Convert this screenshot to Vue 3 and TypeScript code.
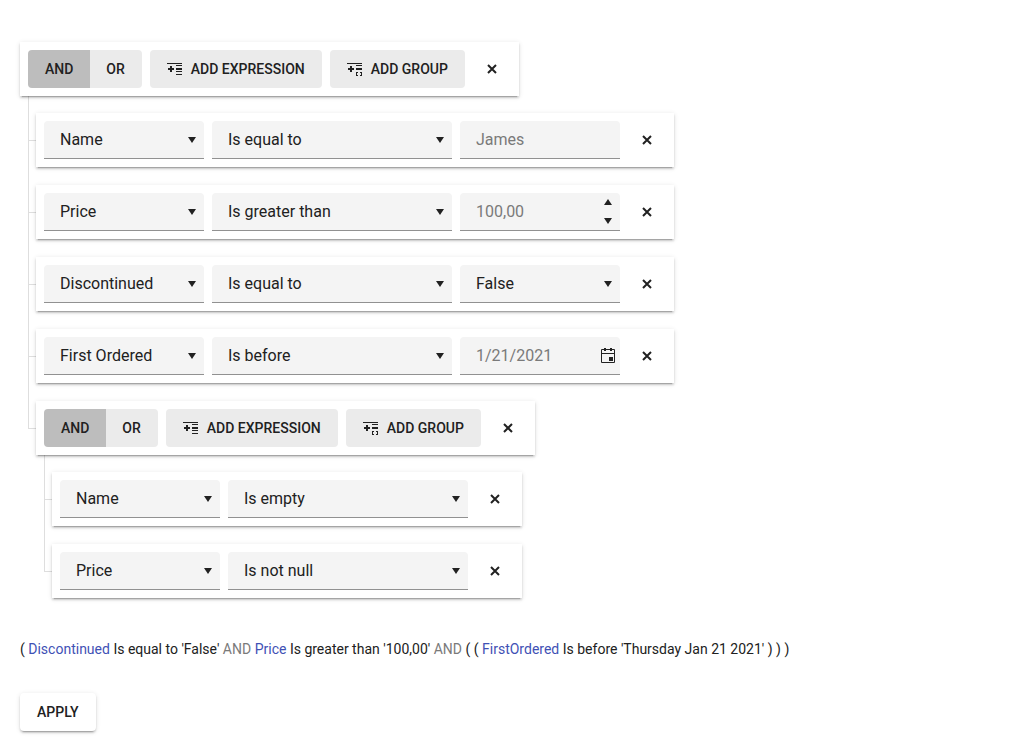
<script setup lang="ts">
import { ref } from 'vue'

type Logic = 'AND' | 'OR'
type ValueKind = 'text' | 'number' | 'boolean' | 'date' | 'none'

interface GroupNode {
  id: number
  type: 'group'
  depth: number
  logic: Logic
}

interface ExpressionNode {
  id: number
  type: 'expression'
  depth: number
  field: string
  operator: string
  kind: ValueKind
  value: string
}

type FilterNode = GroupNode | ExpressionNode

interface PreviewToken {
  text: string
  style: 'plain' | 'name' | 'logic'
}

const logics: Logic[] = ['AND', 'OR']
const fields = ['Name', 'Price', 'Discontinued', 'First Ordered']
const operators = ['Is equal to', 'Is greater than', 'Is before', 'Is empty', 'Is not null']

const nodes = ref<FilterNode[]>([
  { id: 1, type: 'group', depth: 0, logic: 'AND' },
  { id: 2, type: 'expression', depth: 1, field: 'Name', operator: 'Is equal to', kind: 'text', value: 'James' },
  { id: 3, type: 'expression', depth: 1, field: 'Price', operator: 'Is greater than', kind: 'number', value: '100,00' },
  { id: 4, type: 'expression', depth: 1, field: 'Discontinued', operator: 'Is equal to', kind: 'boolean', value: 'False' },
  { id: 5, type: 'expression', depth: 1, field: 'First Ordered', operator: 'Is before', kind: 'date', value: '1/21/2021' },
  { id: 6, type: 'group', depth: 1, logic: 'AND' },
  { id: 7, type: 'expression', depth: 2, field: 'Name', operator: 'Is empty', kind: 'none', value: '' },
  { id: 8, type: 'expression', depth: 2, field: 'Price', operator: 'Is not null', kind: 'none', value: '' },
])

const preview: PreviewToken[] = [
  { text: '(', style: 'plain' },
  { text: 'Discontinued', style: 'name' },
  { text: "Is equal to 'False'", style: 'plain' },
  { text: 'AND', style: 'logic' },
  { text: 'Price', style: 'name' },
  { text: "Is greater than '100,00'", style: 'plain' },
  { text: 'AND', style: 'logic' },
  { text: '( (', style: 'plain' },
  { text: 'FirstOrdered', style: 'name' },
  { text: "Is before 'Thursday Jan 21 2021' ) ) )", style: 'plain' },
]

let nextId = 9

function remove(index: number) {
  const depth = nodes.value[index].depth
  let end = index + 1
  if (nodes.value[index].type === 'group') {
    while (end < nodes.value.length && nodes.value[end].depth > depth) end++
  }
  nodes.value.splice(index, end - index)
}

function addExpression(index: number) {
  nodes.value.splice(index + 1, 0, {
    id: nextId++,
    type: 'expression',
    depth: nodes.value[index].depth + 1,
    field: 'Name',
    operator: 'Is equal to',
    kind: 'text',
    value: '',
  })
}

function addGroup(index: number) {
  nodes.value.splice(index + 1, 0, {
    id: nextId++,
    type: 'group',
    depth: nodes.value[index].depth + 1,
    logic: 'AND',
  })
}

function step(node: ExpressionNode, delta: number) {
  const amount = parseFloat(node.value.replace(',', '.')) || 0
  node.value = (amount + delta).toFixed(2).replace('.', ',')
}
</script>

<template>
  <main class="page">
    <ul class="tree">
      <li
        v-for="(node, index) in nodes"
        :key="node.id"
        class="node"
        :class="['depth-' + node.depth, node.type]"
      >
        <div v-if="node.type === 'group'" class="card" role="toolbar" aria-label="Filter group">
          <div class="logic-group" role="group" aria-label="Logic">
            <button
              v-for="logic in logics"
              :key="logic"
              type="button"
              class="button"
              :class="{ selected: node.logic === logic }"
              :aria-pressed="node.logic === logic"
              @click="node.logic = logic"
            >{{ logic }}</button>
          </div>
          <button type="button" class="button" @click="addExpression(index)">
            <svg class="icon" viewBox="0 0 16 16" aria-hidden="true">
              <path d="M0 2h15v1H0zM9 4h6v1H9zM9 7h6v2H9zM9 10h6v1H9zM9 13h6v1H9zM3 5h2v2h2v2H5v2H3V9H1V7h2z" />
            </svg>
            <span>ADD EXPRESSION</span>
          </button>
          <button type="button" class="button" @click="addGroup(index)">
            <svg class="icon" viewBox="0 0 16 16" aria-hidden="true">
              <path d="M0 2h15v1H0zM9 4h6v1H9zM9 7h6v2H9zM3 5h2v2h2v2H5v2H3V9H1V7h2zM9 11h2v1h-1v2h1v1H9zM13 11h2v4h-2v-1h1v-2h-1z" />
            </svg>
            <span>ADD GROUP</span>
          </button>
          <button type="button" class="close" aria-label="Remove group" @click="remove(index)">
            <svg class="icon" viewBox="0 0 16 16" aria-hidden="true">
              <path class="cross" d="M4 4l8 8M12 4l-8 8" />
            </svg>
          </button>
        </div>

        <div v-else class="card">
          <div class="field narrow">
            <select v-model="node.field" aria-label="Field">
              <option v-for="name in fields" :key="name">{{ name }}</option>
            </select>
            <svg class="caret" viewBox="0 0 8 6" aria-hidden="true"><path d="M0 0h8L4 6z" /></svg>
          </div>
          <div class="field wide">
            <select v-model="node.operator" aria-label="Operator">
              <option v-for="name in operators" :key="name">{{ name }}</option>
            </select>
            <svg class="caret" viewBox="0 0 8 6" aria-hidden="true"><path d="M0 0h8L4 6z" /></svg>
          </div>

          <div v-if="node.kind === 'boolean'" class="field narrow">
            <select v-model="node.value" aria-label="Value">
              <option>True</option>
              <option>False</option>
            </select>
            <svg class="caret" viewBox="0 0 8 6" aria-hidden="true"><path d="M0 0h8L4 6z" /></svg>
          </div>
          <div v-else-if="node.kind !== 'none'" class="field narrow">
            <input v-model="node.value" type="text" aria-label="Value" />
            <div v-if="node.kind === 'number'" class="spinner">
              <button type="button" aria-label="Increase value" @click="step(node, 1)">
                <svg viewBox="0 0 8 6" aria-hidden="true"><path d="M0 6h8L4 0z" /></svg>
              </button>
              <button type="button" aria-label="Decrease value" @click="step(node, -1)">
                <svg viewBox="0 0 8 6" aria-hidden="true"><path d="M0 0h8L4 6z" /></svg>
              </button>
            </div>
            <button v-if="node.kind === 'date'" type="button" class="calendar" aria-label="Open calendar">
              <svg class="icon" viewBox="0 0 16 16" aria-hidden="true">
                <path fill-rule="evenodd" d="M4 0h2v1h4V0h2v1h2a1 1 0 0 1 1 1v12a1 1 0 0 1-1 1H2a1 1 0 0 1-1-1V2a1 1 0 0 1 1-1h2zM2 2v3h12V2h-2v1h-2V2H6v1H4V2zM2 6v8h12V6zM9 9h4v4H9z" />
              </svg>
            </button>
          </div>

          <button type="button" class="close" aria-label="Remove expression" @click="remove(index)">
            <svg class="icon" viewBox="0 0 16 16" aria-hidden="true">
              <path class="cross" d="M4 4l8 8M12 4l-8 8" />
            </svg>
          </button>
        </div>
      </li>
    </ul>

    <p class="preview">
      <template v-for="(token, index) in preview" :key="index"><span :class="token.style">{{ token.text }}</span>{{ ' ' }}</template>
    </p>

    <button type="button" class="button apply">APPLY</button>
  </main>
</template>

<style scoped>
.page {
  padding: 42px 20px 18px;
  color: #212121;
  font-family: Roboto, "Liberation Sans", sans-serif;
  font-size: 14px;
  line-height: 20px;
}

.tree {
  display: flex;
  flex-direction: column;
  align-items: flex-start;
  gap: 18px;
  margin: 0;
  padding: 0;
  list-style: none;
  isolation: isolate;
}

.node {
  position: relative;
}

/* A group header sits slightly closer to its first child. */
.node.group {
  margin-bottom: -1px;
}

.depth-1 {
  margin-left: 16px;
}

.depth-2 {
  margin-left: 32px;
}

/* Connector from the previous row's middle to this row's middle. */
.depth-1::before,
.depth-2::before {
  content: "";
  position: absolute;
  z-index: -1;
  top: -45px;
  bottom: 26px;
  left: -8px;
  width: 8px;
  box-sizing: border-box;
  border-left: 1px solid #dedede;
  border-bottom: 1px solid #dedede;
}

.card {
  display: flex;
  gap: 8px;
  padding: 8px;
  background: #fff;
}

.card,
.apply {
  box-shadow: 0 3px 1px -2px rgba(0, 0, 0, 0.2), 0 2px 2px rgba(0, 0, 0, 0.14), 0 1px 5px rgba(0, 0, 0, 0.12);
}

.logic-group {
  display: flex;
  overflow: hidden;
  border-radius: 4px;
}

.logic-group .button {
  border-radius: 0;
}

.logic-group .button + .button {
  margin-left: -1px;
}

button {
  margin: 0;
  border: 0;
  color: inherit;
  font: inherit;
  cursor: pointer;
}

.button {
  display: flex;
  align-items: center;
  gap: 8px;
  height: 38px;
  padding: 0 17px;
  border-radius: 4px;
  background: #ebebeb;
  font-weight: 500;
  white-space: nowrap;
}

.button.selected {
  position: relative;
  background: #bdbdbd;
}

.icon {
  display: block;
  flex: none;
  width: 16px;
  height: 16px;
  fill: currentColor;
}

.cross {
  fill: none;
  stroke: currentColor;
  stroke-width: 2;
}

.close {
  display: flex;
  align-items: center;
  justify-content: center;
  width: 38px;
  height: 38px;
  padding: 0;
  background: transparent;
}

.field {
  position: relative;
  display: flex;
  height: 38px;
  box-sizing: border-box;
  overflow: hidden;
  border-bottom: 1px solid #919191;
  border-radius: 4px 4px 0 0;
  background: #f4f4f4;
}

.narrow {
  width: 160px;
}

.wide {
  width: 240px;
}

select,
input {
  flex: 1;
  min-width: 0;
  margin: 0;
  padding: 0 16px;
  border: 0;
  border-radius: 0;
  outline: 0;
  appearance: none;
  background: transparent;
  color: #212121;
  font: inherit;
  font-size: 16px;
}

input {
  padding-right: 0;
  color: #7a7a7a;
}

.caret {
  position: absolute;
  top: 16px;
  right: 8px;
  width: 8px;
  height: 6px;
  fill: currentColor;
  pointer-events: none;
}

.spinner {
  display: flex;
  flex-direction: column;
  width: 24px;
}

.spinner button {
  display: flex;
  flex: 1;
  align-items: center;
  justify-content: center;
  padding: 0;
  background: transparent;
}

.spinner svg {
  width: 8px;
  height: 6px;
  fill: currentColor;
}

.calendar {
  display: flex;
  align-items: center;
  padding: 0 4px;
  background: transparent;
}

.preview {
  margin: 41px 0 34px;
}

.name {
  color: #3f51b5;
}

.logic {
  color: #7a7a7a;
}

.apply {
  background: #fff;
}
</style>
